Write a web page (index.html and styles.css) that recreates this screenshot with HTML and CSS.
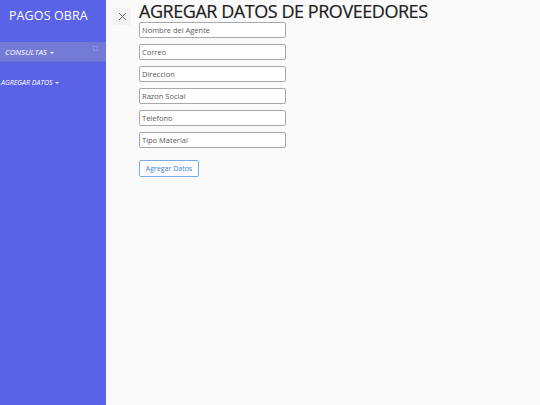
FILE: index.html
```html
<!DOCTYPE html>
<html lang="es">
<head>
<meta charset="utf-8">
<title>Pagos Obra</title>
<link rel="stylesheet" href="styles.css">
</head>
<body>
<div class="layout">
  <nav class="sidebar">
    <div class="brand">PAGOS OBRA</div>
    <div class="menu-item active"><span class="menu-label">CONSULTAS <span class="caret"></span></span><span class="dot"></span></div>
    <div class="menu-item sub"><span class="menu-label">AGREGAR DATOS <span class="caret"></span></span></div>
  </nav>
  <main class="main">
    <button class="close" aria-label="Cerrar">
      <svg width="9" height="9" viewBox="0 0 9 9"><path d="M1 1 L8 8 M8 1 L1 8" stroke="#666" stroke-width="1" fill="none"/></svg>
    </button>
    <div class="content">
      <h1 class="title">AGREGAR DATOS DE PROVEEDORES</h1>
      <form class="form">
        <input class="field" type="text" placeholder="Nombre del Agente">
        <input class="field" type="text" placeholder="Correo">
        <input class="field" type="text" placeholder="Direccion">
        <input class="field" type="text" placeholder="Razon Social">
        <input class="field" type="text" placeholder="Telefono">
        <input class="field" type="text" placeholder="Tipo Material">
        <button class="submit" type="button">Agregar Datos</button>
      </form>
    </div>
  </main>
</div>
</body>
</html>
```
FILE: styles.css
```css
html, body {
  margin: 0;
  padding: 0;
  height: 100%;
}
body {
  font-family: "Open Sans", "Liberation Sans", sans-serif;
  background: #fafafa;
}
.layout {
  display: flex;
  height: 100%;
}
.sidebar {
  width: 106px;
  flex: none;
  background: #5a63e6;
  color: #fff;
}
.brand {
  font-size: 12.5px;
  font-weight: 500;
  padding: 7px 0 0 9px;
  height: 36px;
  box-sizing: border-box;
  letter-spacing: 0.1px;
}
.menu-item {
  display: flex;
  align-items: center;
  justify-content: space-between;
  font-style: italic;
  font-size: 8px;
  box-sizing: border-box;
}
.menu-item.active {
  margin-top: 6px;
  height: 20px;
  background: #737bd6;
  padding: 0 8px 0 5px;
  border-bottom: 1px solid #6a72dc;
}
.menu-item.sub {
  margin-top: 10px;
  height: 20px;
  padding-left: 1px;
  font-size: 7px;
}
.caret {
  display: inline-block;
  width: 0;
  height: 0;
  border-left: 2.5px solid transparent;
  border-right: 2.5px solid transparent;
  border-top: 2.5px solid #fff;
  vertical-align: middle;
  margin-left: 1px;
}
.dot {
  width: 3px;
  height: 3px;
  border: 1px solid #8d94de;
  margin-top: -6px;
}
.main {
  flex: 1;
  display: flex;
  padding: 0 0 0 7px;
}
.close {
  width: 18px;
  height: 17px;
  margin-top: 8px;
  background: #f2f2f2;
  border: none;
  padding: 0;
  display: flex;
  align-items: center;
  justify-content: center;
  flex: none;
}
.content {
  margin-left: 8px;
  display: flex;
  flex-direction: column;
}
.title {
  margin: 0;
  font-size: 18px;
  font-weight: 500;
  line-height: 22px;
  color: #222;
  letter-spacing: -0.45px;
  white-space: nowrap;
  -webkit-text-stroke: 0.2px #222;
}
.form {
  display: flex;
  flex-direction: column;
  align-items: flex-start;
  gap: 6px;
  margin-top: 0;
}
.field {
  width: 147px;
  height: 16px;
  box-sizing: border-box;
  border: 1px solid #a8a8a8;
  border-radius: 2px;
  background: #fff;
  font-family: inherit;
  font-size: 7.5px;
  padding: 0 2px;
  margin: 0;
}
.field::placeholder {
  color: #5a5a5a;
}
.submit {
  margin-top: 6px;
  width: 60px;
  height: 17px;
  border: 1px solid #78ace6;
  border-radius: 2px;
  background: #fff;
  color: #3b82d4;
  font-family: inherit;
  font-size: 7px;
  padding: 0;
}
```
